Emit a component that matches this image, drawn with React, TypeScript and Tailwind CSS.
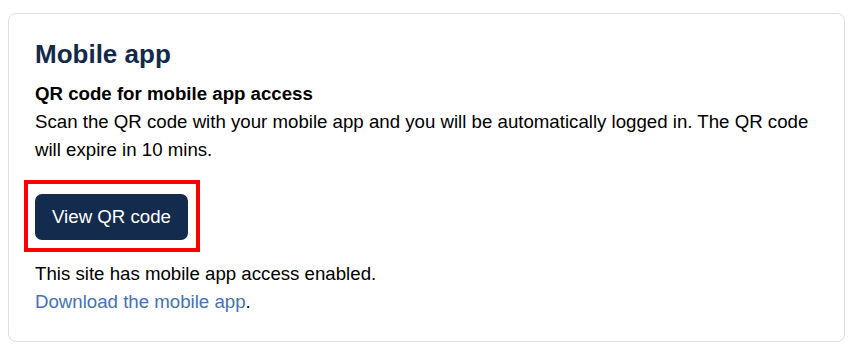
export default function App() {
  return (
    <div className="min-h-screen bg-white pt-[13px] pl-2 text-black" style={{ fontFamily: '"Liberation Sans", Arial, sans-serif' }}>
      {/* ── Mobile app card ── */}
      <section className="w-[837px] rounded-lg border border-[#dedede] px-[26px] pt-[25px] pb-[25px]">
        <h2 className="text-[26px] leading-[31px] font-bold text-[#13294b]">Mobile app</h2>

        <h3 className="mt-[10px] text-[18.67px] leading-[28px] font-bold">QR code for mobile app access</h3>
        <p className="text-[18.67px] leading-[28px]">
          Scan the QR code with your mobile app and you will be automatically logged in. The QR code will expire in 10 mins.
        </p>

        <div className="mt-[16px] inline-block border-4 border-[#ff0000] pt-[10px] pb-[8px] pl-[7px] pr-[8px] -ml-[11px]">
          <button
            type="button"
            className="flex h-[46px] items-center rounded-[7px] bg-[#132b4d] px-[17px] text-[18.67px] text-white"
          >
            View QR code
          </button>
        </div>

        <p className="mt-[8px] text-[18.67px] leading-[28px]">
          This site has mobile app access enabled.
          <br />
          <a href="#" className="text-[#4272b8]">Download the mobile app</a>.
        </p>
      </section>
    </div>
  )
}
